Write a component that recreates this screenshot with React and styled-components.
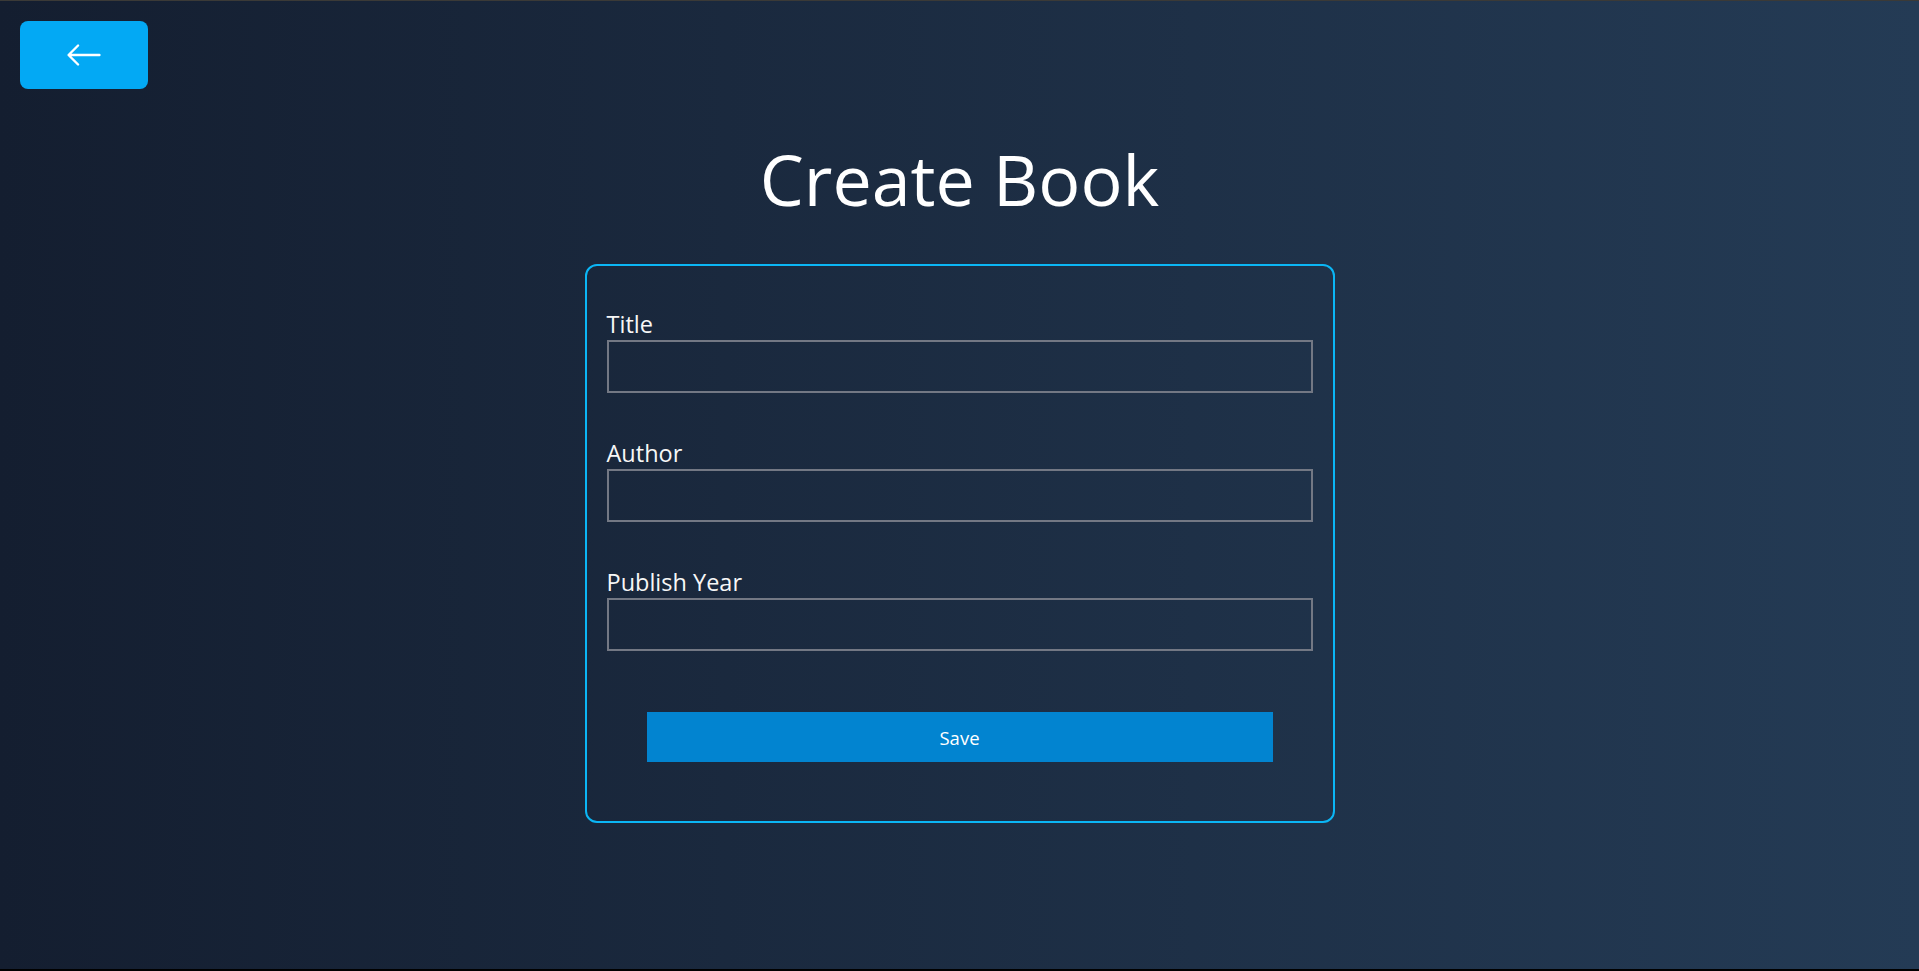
import React, { useState } from "react";
import styled, { createGlobalStyle } from "styled-components";
import { BsArrowLeft } from "react-icons/bs";

const GlobalStyle = createGlobalStyle`
  html, body {
    margin: 0;
    padding: 0;
  }

  body {
    font-family: "Open Sans", "Noto Sans", sans-serif;
    color: #ffffff;
  }

  * {
    box-sizing: border-box;
  }
`;

const Page = styled.main`
  min-height: 100vh;
  padding: 20px 20px 0 20px;
  border-top: 1px solid #3b3a37;
  border-bottom: 2px solid #000000;
  background: linear-gradient(to right, #141e30, #243b55);
`;

const BackButton = styled.button`
  width: 128px;
  height: 68px;
  display: flex;
  align-items: center;
  justify-content: center;
  border: none;
  border-radius: 8px;
  background-color: #03a9f4;
  color: #ffffff;
  cursor: pointer;
`;

const Heading = styled.h1`
  margin: 48px 0 43px 0;
  font-size: 70px;
  font-weight: 400;
  line-height: 84px;
  text-align: center;
`;

const Card = styled.form`
  width: 750px;
  margin: 0 auto;
  padding: 20px;
  display: flex;
  flex-direction: column;
  border: 2px solid #0bb6f5;
  border-radius: 12px;
`;

const Field = styled.div`
  margin: 22px 0;
  display: flex;
  flex-direction: column;
`;

const Label = styled.label`
  font-size: 23.5px;
  line-height: 32px;
  color: #f7f7f7;
`;

const Input = styled.input`
  width: 100%;
  height: 53px;
  padding: 0 12px;
  border: 2px solid #737884;
  background: transparent;
  color: #ffffff;
  font-family: inherit;
  font-size: 20px;
  outline: none;
`;

const SaveButton = styled.button`
  width: 626px;
  height: 50px;
  margin: 39px auto 39px auto;
  border: none;
  background-color: #0284d0;
  color: #ffffff;
  font-family: inherit;
  font-size: 18.5px;
  cursor: pointer;
`;

const fields = [
  { id: "title", label: "Title", type: "text" },
  { id: "author", label: "Author", type: "text" },
  { id: "publishYear", label: "Publish Year", type: "number" }
];

const App = () => {
  const [book, setBook] = useState({ title: "", author: "", publishYear: "" });

  const handleChange = (event) => {
    setBook({ ...book, [event.target.name]: event.target.value });
  };

  return (
    <Page>
      <GlobalStyle />
      <BackButton type="button" aria-label="Back">
        <BsArrowLeft size={38} />
      </BackButton>
      <Heading>Create Book</Heading>
      <Card onSubmit={(event) => event.preventDefault()}>
        {fields.map((field) => (
          <Field key={field.id}>
            <Label htmlFor={field.id}>{field.label}</Label>
            <Input
              id={field.id}
              name={field.id}
              type={field.type}
              value={book[field.id]}
              onChange={handleChange}
            />
          </Field>
        ))}
        <SaveButton type="submit">Save</SaveButton>
      </Card>
    </Page>
  );
};

export default App;
